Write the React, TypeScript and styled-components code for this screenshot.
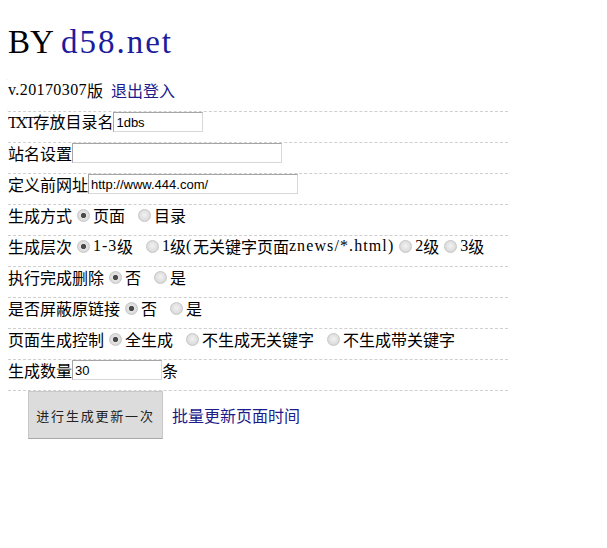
import React from 'react';
import styled, { createGlobalStyle } from 'styled-components';

const Global = createGlobalStyle`
  body {
    margin: 8px;
    background: #fff;
    color: #000;
    font-family: "Noto Sans CJK SC", "Liberation Sans", sans-serif;
    font-size: 16px;
  }
`;

function App() {
  return (
    <>
      <Global />
      <Page>
        <Title>
          BY <Brand>d58.net</Brand>
        </Title>
        <Version>
          <Latin $ls={0.4}>v.20170307</Latin>版<Link href="#">退出登入</Link>
        </Version>

        <Row>
          <Label>
            <Latin $ls={-1.9}>TXT</Latin>存放目录名
          </Label>
          <TextInput $w={90} defaultValue="1dbs" />
        </Row>
        <Row>
          <Label>站名设置</Label>
          <TextInput $w={210} defaultValue="" />
        </Row>
        <Row>
          <Label>定义前网址</Label>
          <TextInput $w={210} defaultValue="http://www.444.com/" />
        </Row>
        <Row>
          <Label>生成方式</Label>
          <Option $trail={8}>
            <Radio type="radio" name="mode" defaultChecked />
            页面
          </Option>
          <Option>
            <Radio type="radio" name="mode" />
            目录
          </Option>
        </Row>
        <Row>
          <Label>生成层次</Label>
          <Option $trail={8}>
            <Radio type="radio" name="level" defaultChecked />
            <Latin $ls={0.9}>1-3</Latin>级
          </Option>
          <Option>
            <Radio type="radio" name="level" />
            <Latin>1</Latin>级<Latin $ls={1.5}>(</Latin>无关键字页面
            <Latin $ls={1.1}>znews/*.html)</Latin>
          </Option>
          <Option>
            <Radio type="radio" name="level" />
            <Latin>2</Latin>级
          </Option>
          <Option>
            <Radio type="radio" name="level" />
            <Latin>3</Latin>级
          </Option>
        </Row>
        <Row>
          <Label>执行完成删除</Label>
          <Option $trail={8}>
            <Radio type="radio" name="del" defaultChecked />
            否
          </Option>
          <Option>
            <Radio type="radio" name="del" />
            是
          </Option>
        </Row>
        <Row>
          <Label>是否屏蔽原链接</Label>
          <Option $trail={8}>
            <Radio type="radio" name="mask" defaultChecked />
            否
          </Option>
          <Option>
            <Radio type="radio" name="mask" />
            是
          </Option>
        </Row>
        <Row>
          <Label>页面生成控制</Label>
          <Option $trail={8}>
            <Radio type="radio" name="ctrl" defaultChecked />
            全生成
          </Option>
          <Option $trail={8}>
            <Radio type="radio" name="ctrl" />
            不生成无关键字
          </Option>
          <Option>
            <Radio type="radio" name="ctrl" />
            不生成带关键字
          </Option>
        </Row>
        <Row>
          <Label>生成数量</Label>
          <TextInput $w={90} defaultValue="30" />
          <span>条</span>
        </Row>
        <ActionRow>
          <Button type="button">进行生成更新一次</Button>
          <Link href="#">批量更新页面时间</Link>
        </ActionRow>
      </Page>
    </>
  );
}

const Page = styled.div`
  width: 500px;
`;

const Title = styled.h1`
  margin: 14px 0 0;
  font-family: "Liberation Serif", serif;
  font-weight: normal;
  font-size: 33px;
  line-height: 40px;
  color: #000;
`;

const Brand = styled.span`
  color: #1c1c9c;
  letter-spacing: 2px;
`;

const Version = styled.div`
  margin: 18px 0 11px;
  line-height: 20px;
  display: flex;
  align-items: center;
`;

const Latin = styled.span<{ $ls?: number }>`
  font-family: "Liberation Serif", serif;
  letter-spacing: ${(p) => p.$ls ?? 0}px;
`;

const Link = styled.a`
  margin-left: 8px;
  color: #1c1c8c;
  text-decoration: none;
`;

const Row = styled.div`
  display: flex;
  align-items: center;
  height: 20px;
  padding-bottom: 10px;
  border-top: 1px dashed #cfcfcf;
  line-height: 20px;
  white-space: nowrap;
`;

const Label = styled.span`
  display: inline-block;
`;

const TextInput = styled.input<{ $w: number }>`
  box-sizing: border-box;
  width: ${(p) => p.$w}px;
  height: 20px;
  margin: 0;
  padding: 1px 2px;
  border: 1px solid;
  border-color: #a5a5a5 #d8d8d8 #d8d8d8 #a5a5a5;
  font-family: "Liberation Sans", Arial, sans-serif;
  font-size: 13px;
  color: #000;
  outline: none;
`;

const Option = styled.label<{ $trail?: number }>`
  display: inline-flex;
  align-items: center;
  margin-right: ${(p) => p.$trail ?? 0}px;
`;

const Radio = styled.input`
  appearance: none;
  box-sizing: border-box;
  width: 13px;
  height: 13px;
  margin: 0 3px 0 5px;
  border-radius: 50%;
  border: 1px solid #c6c6c6;
  background: radial-gradient(circle at 50% 45%, #f2f2f2 0, #dedede 60%, #cbcbcb 100%);

  &:checked {
    background: radial-gradient(circle, #4a4a4a 0, #4a4a4a 2.2px, #e4e4e4 3px, #d0d0d0 100%);
  }
`;

const ActionRow = styled.div`
  display: flex;
  align-items: center;
  border-top: 1px dashed #cfcfcf;
  padding-left: 20px;
`;

const Button = styled.button`
  box-sizing: border-box;
  width: 135px;
  height: 48px;
  margin: 0;
  padding: 0;
  background: #dcdcdc;
  border: 1px solid #c8c8c8;
  border-bottom-color: #a8a8a8;
  font-family: "Noto Sans CJK SC", sans-serif;
  font-size: 13px;
  letter-spacing: 1.8px;
  color: #222;
  + a {
    margin-left: 9px;
  }
`;

export default App;
